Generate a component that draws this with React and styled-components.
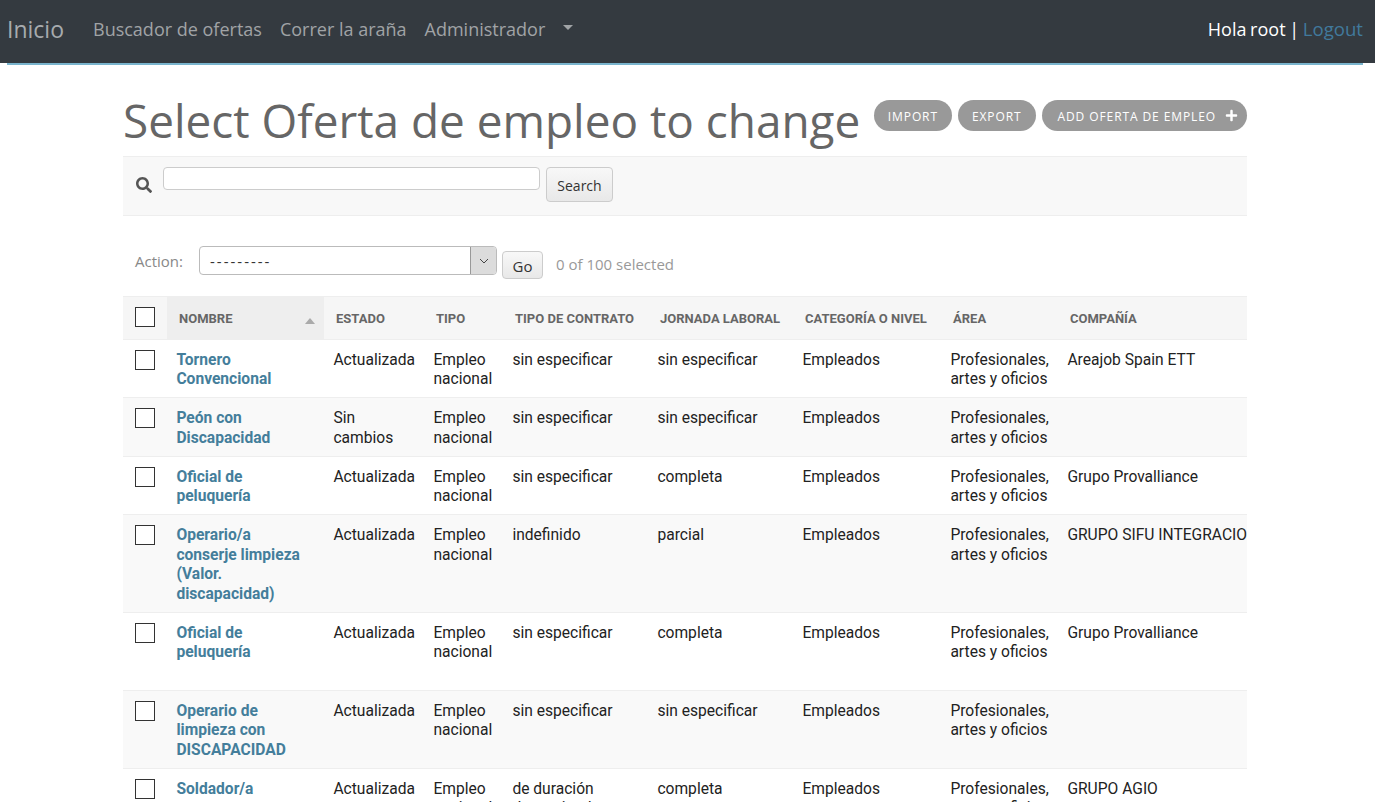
import React from "react";
import styled, { createGlobalStyle } from "styled-components";
import { FaSearch, FaPlus } from "react-icons/fa";

const GlobalStyle = createGlobalStyle`
  html, body { margin: 0; padding: 0; background: #fff; height: 802px; overflow: hidden; }
  body { font-family: "Open Sans", "Noto Sans", sans-serif; color: #212529; }
  * { box-sizing: border-box; }
`;

const columns = [
  { key: "check", width: 44 },
  { key: "nombre", label: "Nombre", width: 157 },
  { key: "estado", label: "Estado", width: 100 },
  { key: "tipo", label: "Tipo", width: 79 },
  { key: "contrato", label: "Tipo de contrato", width: 145 },
  { key: "jornada", label: "Jornada laboral", width: 145 },
  { key: "categoria", label: "Categoría o nivel", width: 148 },
  { key: "area", label: "Área", width: 117 },
  { key: "compania", label: "Compañía", width: 189 },
];

const rows = [
  { nombre: "Tornero Convencional", estado: "Actualizada", contrato: "sin especificar", jornada: "sin especificar", compania: "Areajob Spain ETT" },
  { nombre: "Peón con Discapacidad", estado: "Sin cambios", contrato: "sin especificar", jornada: "sin especificar", compania: "" },
  { nombre: "Oficial de peluquería", estado: "Actualizada", contrato: "sin especificar", jornada: "completa", compania: "Grupo Provalliance" },
  { nombre: "Operario/a conserje limpieza (Valor. discapacidad)", estado: "Actualizada", contrato: "indefinido", jornada: "parcial", compania: "GRUPO SIFU INTEGRACION" },
  { nombre: "Oficial de peluquería", estado: "Actualizada", contrato: "sin especificar", jornada: "completa", compania: "Grupo Provalliance", tall: true },
  { nombre: "Operario de limpieza con DISCAPACIDAD", estado: "Actualizada", contrato: "sin especificar", jornada: "sin especificar", compania: "" },
  { nombre: "Soldador/a", estado: "Actualizada", contrato: "de duración determinada", jornada: "completa", compania: "GRUPO AGIO" },
];

const Navbar = styled.nav`
  height: 65px;
  padding: 0 12px 0 7px;
  background: linear-gradient(#343a40 63px, transparent 63px);
`;

const NavInner = styled.div`
  height: 65px;
  padding-bottom: 6px;
  border-bottom: 2px solid #79b4cd;
  display: flex;
  align-items: center;
  font-size: 18px;
`;

const Brand = styled.a`
  color: #a7abae;
  font-size: 23px;
  margin: 0 29px 0 0;
`;

const NavLink = styled.a`
  color: #a0a3a6;
  margin-right: 18px;
`;

const Caret = styled.span`
  width: 0;
  height: 0;
  margin: 0 0 2px 0;
  border-left: 5px solid transparent;
  border-right: 5px solid transparent;
  border-top: 5px solid #a0a3a6;
`;

const UserBox = styled.div`
  margin-left: auto;
  word-spacing: -1px;
  color: #fff;
`;

const LogoutLink = styled.a`
  color: #41799c;
  font-size: 18.6px;
`;

const Content = styled.main`
  width: 1124px;
  margin: 0 0 0 123px;
`;

const HeaderRow = styled.div`
  display: flex;
  align-items: flex-start;
  justify-content: space-between;
  height: 91px;
`;

const Title = styled.h1`
  margin: 24px 0 0;
  font-size: 45.9px;
  font-weight: 400;
  line-height: 62px;
  color: #666;
  white-space: nowrap;
`;

const Tools = styled.div`
  display: flex;
  gap: 6px;
  margin-top: 35px;
`;

const ToolButton = styled.a`
  display: flex;
  align-items: center;
  gap: 9px;
  height: 31px;
  padding: 1px ${(p) => (p.$icon ? "9px" : "14px")} 0 ${(p) => (p.$icon ? "16px" : "14px")};
  border-radius: 16px;
  background: #999;
  color: #fff;
  font-size: 12px;
  letter-spacing: 0.9px;
  text-transform: uppercase;
  white-space: nowrap;
`;

const PlusIcon = styled(FaPlus)`
  width: 13px;
  height: 13px;
  margin-top: -2px;
`;

const SearchBar = styled.div`
  height: 60px;
  display: flex;
  align-items: flex-start;
  padding: 10px 0 0 13px;
  background: #f8f8f8;
  border-top: 1px solid #eee;
  border-bottom: 1px solid #eee;
`;

const SearchIcon = styled(FaSearch)`
  width: 16px;
  height: 16px;
  margin: 10px 11px 0 0;
  color: #555;
`;

const SearchInput = styled.div`
  width: 377px;
  height: 23px;
  background: #fff;
  border: 1px solid #ccc;
  border-radius: 4px;
`;

const GreyButton = styled.button`
  font-family: "Open Sans", "Noto Sans", sans-serif;
  font-size: 14px;
  color: #333;
  background: linear-gradient(#f8f8f8, #e8e8e8);
  border: 1px solid #ccc;
  border-radius: 4px;
  padding: 1px 0 0;
  width: ${(p) => p.$width}px;
  height: ${(p) => p.$height}px;
`;

const SearchButton = styled(GreyButton)`
  margin-left: 6px;
`;

const ActionBar = styled.div`
  height: 80px;
  padding: 30px 0 0 12px;
  display: flex;
  align-items: flex-start;
  font-size: 15px;
`;

const ActionLabel = styled.span`
  color: #888;
  line-height: 30px;
  width: 64px;
`;

const ActionSelect = styled.div`
  width: 298px;
  height: 29px;
  border: 1px solid #bbb;
  border-radius: 4px;
  display: flex;
  align-items: center;
  justify-content: space-between;
  padding-left: 10px;
  color: #333;
  letter-spacing: 2px;
  overflow: hidden;
`;

const SelectArrow = styled.span`
  width: 26px;
  height: 100%;
  background: #dcdcdc;
  border-left: 1px solid #999;
  display: flex;
  align-items: center;
  justify-content: center;
`;

const GoButton = styled(GreyButton)`
  margin: 5px 13px 0 5px;
  padding-top: 2px;
  font-size: 15px;
`;

const Counter = styled.span`
  color: #999;
  line-height: 27px;
  margin-top: 5px;
`;

const Table = styled.table`
  table-layout: fixed;
  width: 1124px;
  border-collapse: collapse;
  font-family: Roboto, "Liberation Sans", sans-serif;
  font-size: 15.6px;
  line-height: 19.5px;
  color: #222;
`;

const Th = styled.th`
  height: 43px;
  padding: 1px 12px 0;
  background: ${(p) => (p.$sorted ? "#eee" : "#f6f6f6")};
  border-top: 1px solid #eee;
  border-bottom: 1px solid #eee;
  color: #666;
  font-size: 13px;
  font-weight: 700;
  text-align: left;
  text-transform: uppercase;
  white-space: nowrap;
  position: relative;
`;

const SortMark = styled.span`
  position: absolute;
  right: 9px;
  top: 21px;
  width: 0;
  height: 0;
  border-left: 5px solid transparent;
  border-right: 5px solid transparent;
  border-bottom: 6px solid #aaa;
`;

const Row = styled.tr`
  background: ${(p) => (p.$odd ? "#f9f9f9" : "#fff")};
  border-bottom: 1px solid #eee;
`;

const Td = styled.td`
  padding: 10.8px 10px ${(p) => (p.$tall ? "27.2px" : "7.7px")} 9.4px;
  vertical-align: top;
  overflow: hidden;
  white-space: ${(p) => (p.$nowrap ? "nowrap" : "normal")};
`;

const CheckCell = styled(Td)`
  padding-left: 12px;
  padding-top: 10px;
`;

const HeadCheckCell = styled(Th)`
  padding-bottom: 3px;
`;

const Box = styled.span`
  display: block;
  width: 20px;
  height: 20px;
  background: #fff;
  border: 1px solid #333;
`;

const NameLink = styled.a`
  color: #447e9b;
  font-weight: 700;
`;

export default function App() {
  return (
    <>
      <GlobalStyle />
      <Navbar>
        <NavInner>
          <Brand>Inicio</Brand>
          <NavLink>Buscador de ofertas</NavLink>
          <NavLink>Correr la araña</NavLink>
          <NavLink>Administrador</NavLink>
          <Caret />
          <UserBox>
            Hola root | <LogoutLink>Logout</LogoutLink>
          </UserBox>
        </NavInner>
      </Navbar>
      <Content>
        <HeaderRow>
          <Title>Select Oferta de empleo to change</Title>
          <Tools>
            <ToolButton>Import</ToolButton>
            <ToolButton>Export</ToolButton>
            <ToolButton $icon>
              Add Oferta de empleo <PlusIcon />
            </ToolButton>
          </Tools>
        </HeaderRow>
        <SearchBar>
          <SearchIcon />
          <SearchInput />
          <SearchButton $width={67} $height={35}>Search</SearchButton>
        </SearchBar>
        <ActionBar>
          <ActionLabel>Action:</ActionLabel>
          <ActionSelect>
            ---------
            <SelectArrow>
              <svg width="10" height="6" viewBox="0 0 10 6" fill="none" stroke="#444" strokeWidth="1">
                <path d="M1 1l4 4 4-4" />
              </svg>
            </SelectArrow>
          </ActionSelect>
          <GoButton $width={41} $height={28}>Go</GoButton>
          <Counter>0 of 100 selected</Counter>
        </ActionBar>
        <Table>
          <colgroup>
            {columns.map((c) => (
              <col key={c.key} width={c.width} />
            ))}
          </colgroup>
          <thead>
            <tr>
              <HeadCheckCell><Box /></HeadCheckCell>
              {columns.slice(1).map((c) => (
                <Th key={c.key} $sorted={c.key === "nombre"}>
                  {c.label}
                  {c.key === "nombre" && <SortMark />}
                </Th>
              ))}
            </tr>
          </thead>
          <tbody>
            {rows.map((r, i) => (
              <Row key={i} $odd={i % 2 === 1}>
                <CheckCell><Box /></CheckCell>
                <Td $tall={r.tall}><NameLink>{r.nombre}</NameLink></Td>
                <Td>{r.estado}</Td>
                <Td>Empleo nacional</Td>
                <Td>{r.contrato}</Td>
                <Td>{r.jornada}</Td>
                <Td>Empleados</Td>
                <Td>Profesionales, artes y oficios</Td>
                <Td $nowrap>{r.compania}</Td>
              </Row>
            ))}
          </tbody>
        </Table>
      </Content>
    </>
  );
}
